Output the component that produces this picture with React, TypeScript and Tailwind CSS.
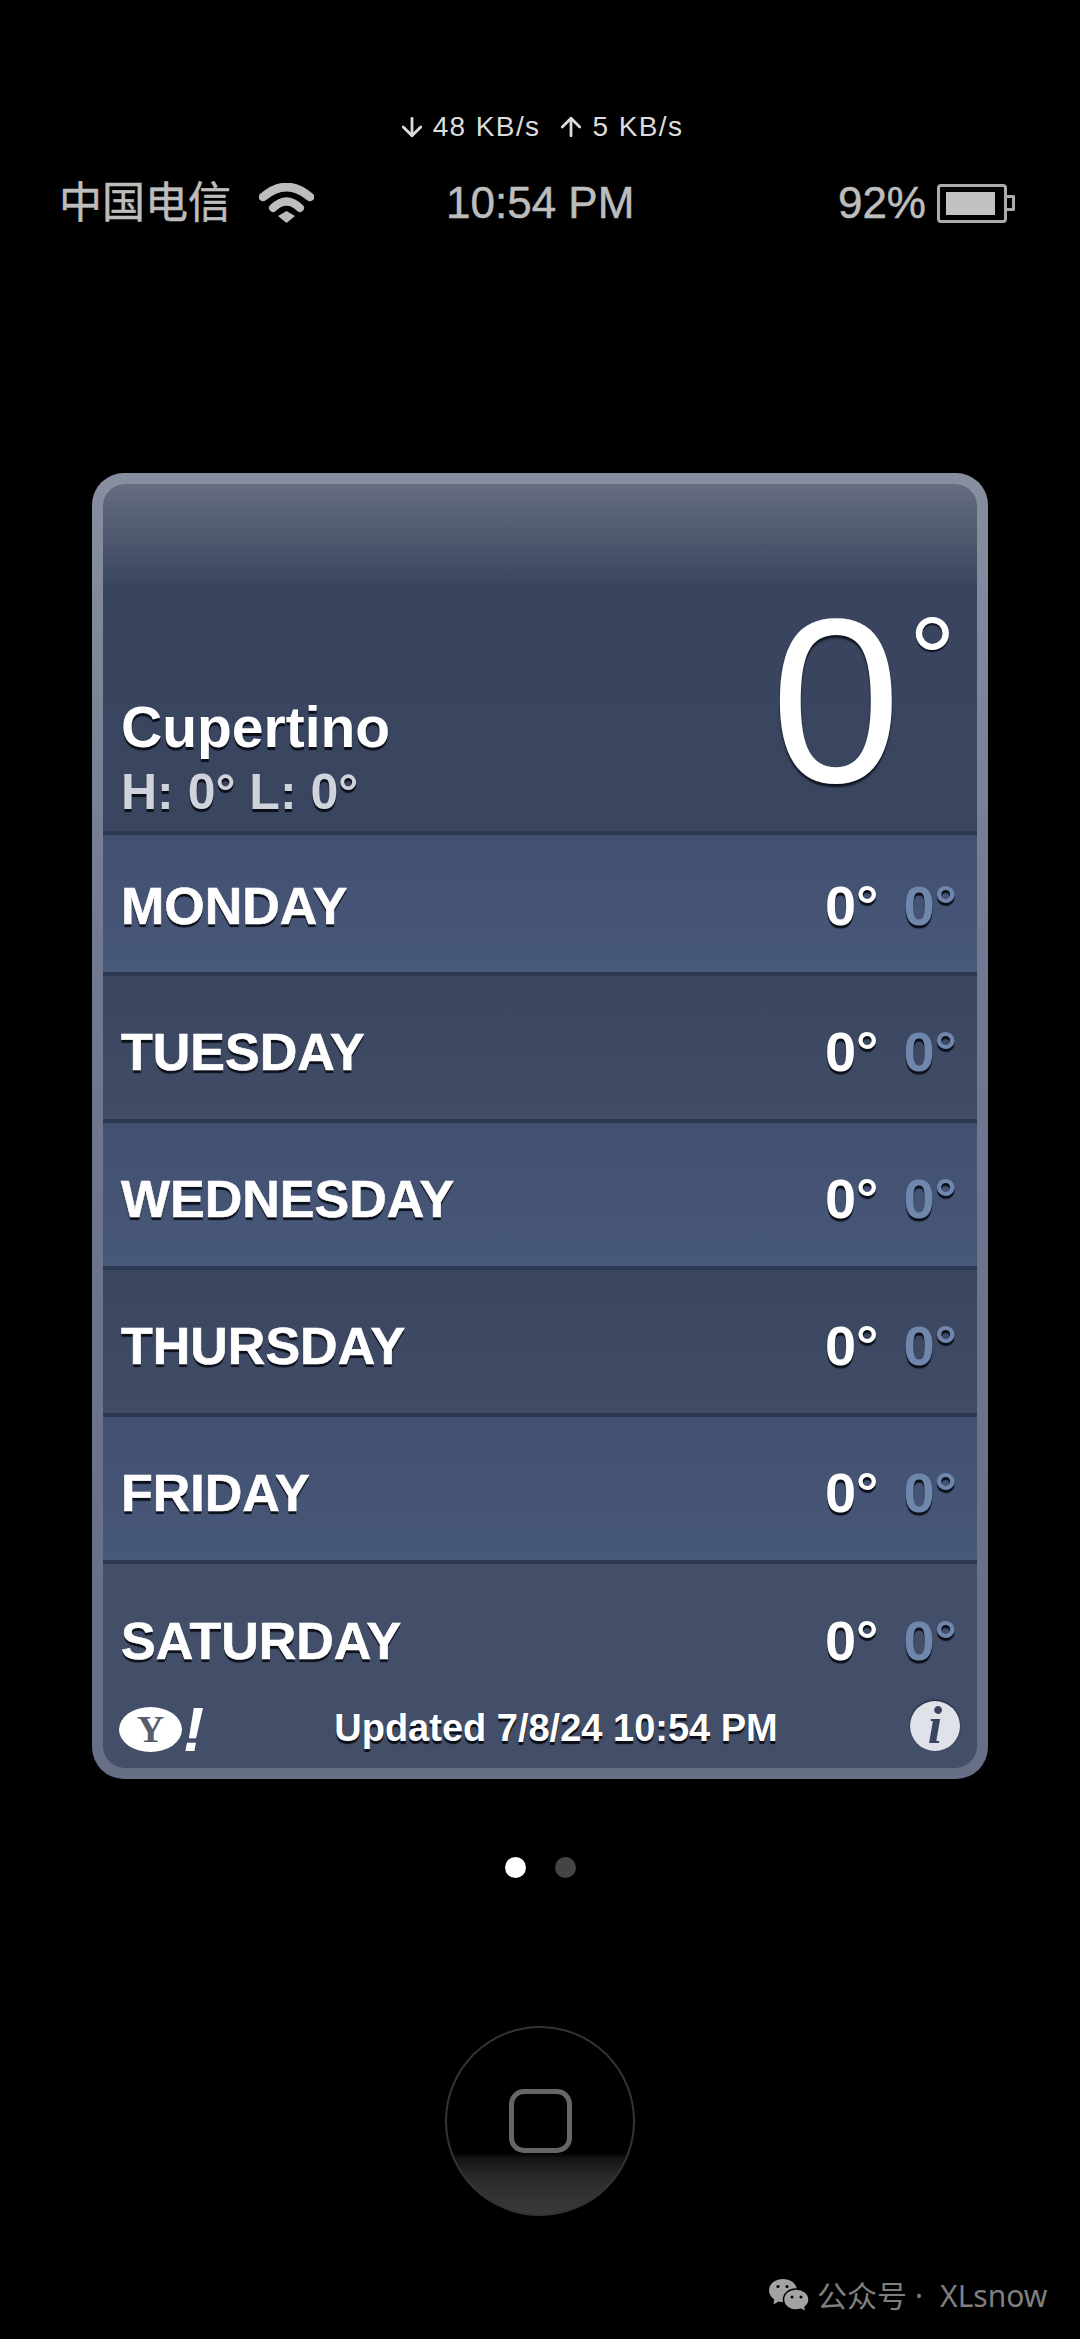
import { ArrowDown, ArrowUp } from "lucide-react"

const DAYS = ["MONDAY", "TUESDAY", "WEDNESDAY", "THURSDAY", "FRIDAY", "SATURDAY"]

const FONT = "font-['Liberation_Sans','Noto_Sans_CJK_SC',sans-serif]"

function WifiIcon() {
  return (
    <svg width="55" height="40" viewBox="0 0 55 40" fill="#bdbdbd">
      <path d="M4 14 Q 27.5 -6 51 14" fill="none" stroke="#bdbdbd" strokeWidth="8.5" strokeLinecap="round" />
      <path d="M14 25 Q 27.5 12 41 25" fill="none" stroke="#bdbdbd" strokeWidth="8" strokeLinecap="round" />
      <path d="M19 33 L 27.5 28 L 36 33 L 27.5 40 Z" />
    </svg>
  )
}

function BatteryIcon() {
  return (
    <div className="flex items-center">
      <div className="w-[70px] h-[39px] border-[3px] border-[#ababab] rounded-[4px] py-[5px] px-[6px]">
        <div className="h-full w-[49px] bg-[#c2c2c2]" />
      </div>
      <div className="w-[8px] h-[16px] border-[3px] border-l-0 border-[#ababab] rounded-r-[2px]" />
    </div>
  )
}

function WeChatIcon() {
  return (
    <svg width="42" height="36" viewBox="0 0 42 36">
      <path d="M15 1 C 23 1 29 6 29 12.5 C 29 19 23 24 15 24 C 13.5 24 12 23.8 10.5 23.4 L 5.5 26.5 L 6.2 21.3 C 3 19 1 16 1 12.5 C 1 6 7 1 15 1 Z" fill="#a3a3a3" />
      <path d="M28 11 C 35 11 41 15.5 41 21.5 C 41 24.6 39.5 27.2 37 29 L 38 34 L 33 31.2 C 31.4 31.7 29.8 32 28 32 C 21 32 15.5 27.5 15.5 21.5 C 15.5 15.5 21 11 28 11 Z" fill="#a3a3a3" stroke="#000" strokeWidth="1.5" />
      <circle cx="10" cy="8.5" r="1.6" fill="#000" />
      <circle cx="19" cy="8.5" r="1.6" fill="#000" />
      <circle cx="24" cy="19" r="1.5" fill="#000" />
      <circle cx="33" cy="19" r="1.5" fill="#000" />
    </svg>
  )
}

function Temps() {
  return (
    <div className="flex gap-[25px] text-[56px] leading-none font-bold">
      <span className="text-white [text-shadow:0_3px_1px_#0b0f18]">0°</span>
      <span className="text-[#6f86ad] [text-shadow:0_3px_1px_#0b0f18]">0°</span>
    </div>
  )
}

function rowClass(i: number) {
  if (i === 5) return "h-[131px] shrink-0 pt-[49px] pl-[18px] pr-[20px] flex justify-between items-start bg-[#434e68]"
  if (i === 0)
    return "h-[141px] shrink-0 pt-[4px] border-b-[4px] border-[#2c3750] pl-[18px] pr-[20px] flex justify-between items-center bg-[linear-gradient(180deg,#425072_0%,#485878_100%)]"
  if (i % 2 === 0)
    return "h-[147px] shrink-0 pt-[8px] border-b-[4px] border-[#2c3750] pl-[18px] pr-[20px] flex justify-between items-center bg-[linear-gradient(180deg,#425072_0%,#485878_100%)]"
  return "h-[147px] shrink-0 pt-[8px] border-b-[4px] border-[#2c3750] pl-[18px] pr-[20px] flex justify-between items-center bg-[linear-gradient(180deg,#3a4560_0%,#414c66_100%)]"
}

export default function App() {
  return (
    <div className={`w-[1080px] h-[2339px] bg-black overflow-hidden flex flex-col ${FONT}`}>
      {/* net speed */}
      <div className="pt-[112px] h-[156px] flex justify-center items-start text-[28px] leading-[30px] tracking-[1.4px] text-[#dcdcdc]">
        <div className="flex items-center">
          <ArrowDown size={30} strokeWidth={2.2} className="mr-[6px]" />
          <span>48 KB/s</span>
          <ArrowUp size={30} strokeWidth={2.2} className="ml-[16px] mr-[6px]" />
          <span>5 KB/s</span>
        </div>
      </div>

      {/* status bar */}
      <div className="relative h-[94px] flex items-center justify-between pl-[59px] pr-[65px] text-[44px] text-[#bdbdbd] [-webkit-text-stroke:0.5px_#bdbdbd]">
        <div className="flex items-center">
          <span className="text-[43px]">中国电信</span>
          <div className="ml-[28px]">
            <WifiIcon />
          </div>
        </div>
        <span className="absolute left-[446px]">10:54 PM</span>
        <div className="flex items-center gap-[11px]">
          <span className="text-[44px]">92%</span>
          <BatteryIcon />
        </div>
      </div>

      {/* weather card */}
      <div className="mt-[223px] ml-[92px] w-[896px] h-[1306px] rounded-[32px] p-[11px] bg-[linear-gradient(180deg,#878e9f_0%,#6f7890_40%,#666f85_100%)]">
        <div className="h-[1284px] rounded-[22px] overflow-hidden flex flex-col text-white">
          <div className="relative h-[351px] shrink-0 border-b-[4px] border-[#2c3750] bg-[linear-gradient(180deg,#666d81_0%,#515a70_14%,#3f4a63_26%,#39445e_30%,#3a4560_100%)] flex flex-col justify-end pl-[18px] pb-[5px]">
            <div className="text-[57px] leading-[62px] font-bold [text-shadow:0_3px_1px_#0b0f18]">Cupertino</div>
            <div className="text-[50px] leading-[68px] font-bold text-[#cfd4dc] [text-shadow:0_3px_1px_#0b0f18]">H: 0° L: 0°</div>
            <div className="absolute right-[21px] top-[100px] flex items-start">
              <span className="text-[234px] leading-[234px] [text-shadow:0_3px_2px_#0f1420]">0</span>
              <span className="text-[118px] leading-[118px] mt-[16px] ml-[8px] [text-shadow:0_2px_1px_#0f1420]">°</span>
            </div>
          </div>

          {DAYS.map((day, i) => (
            <div key={day} className={rowClass(i)}>
              <span className="text-[52px] leading-[56px] font-bold [-webkit-text-stroke:0.6px_#fff] [text-shadow:0_3px_1px_#0b0f18]">{day}</span>
              <Temps />
            </div>
          ))}

          {/* footer */}
          <div className="relative flex-1 bg-[#434e68] flex items-center justify-center pb-[7px] pl-[32px]">
            <div className="absolute left-[16px] top-[11px] flex items-center">
              <div className="w-[63px] h-[45px] rounded-[50%] bg-white flex items-center justify-center text-[38px] leading-none font-bold text-[#565d6c] font-['Liberation_Serif',serif]">
                Y
              </div>
              <span className="ml-[1px] text-[63px] leading-[46px] font-bold italic text-white">!</span>
            </div>
            <span className="text-[38px] leading-[44px] font-bold [text-shadow:0_3px_1px_#0b0f18]">Updated 7/8/24 10:54 PM</span>
            <div className="absolute right-[17px] top-[6px] w-[50px] h-[50px] rounded-full bg-[#dfe2e8] shadow-[0_-1px_2px_#1c2333] flex items-center justify-center text-[52px] leading-none font-bold italic text-[#3c4560] font-['Liberation_Serif',serif]">
              i
            </div>
          </div>
        </div>
      </div>

      {/* page dots */}
      <div className="mt-[78px] flex justify-center gap-[29px]">
        <div className="w-[21px] h-[21px] rounded-full bg-white" />
        <div className="w-[21px] h-[21px] rounded-full bg-[#444]" />
      </div>

      {/* home button */}
      <div className="mt-[148px] flex justify-center">
        <div className="w-[190px] h-[190px] rounded-full border-[2px] border-[#333] flex items-center justify-center bg-[linear-gradient(180deg,#000_0%,#000_67%,#141414_70%,#2c2c2c_82%,#3a3a3a_100%)]">
          <div className="w-[63px] h-[64px] rounded-[15px] border-[5px] border-[#666]" />
        </div>
      </div>

      {/* watermark */}
      <div className="mt-[62px] flex items-center pl-[768px] text-[30px] leading-[36px] text-[#7f7f7f] font-['Noto_Sans','Noto_Sans_CJK_SC',sans-serif]">
        <WeChatIcon />
        <span className="ml-[7px]">公众号</span>
        <span className="ml-[8px]">·</span>
        <span className="ml-[17px]">XLsnow</span>
      </div>
    </div>
  )
}
